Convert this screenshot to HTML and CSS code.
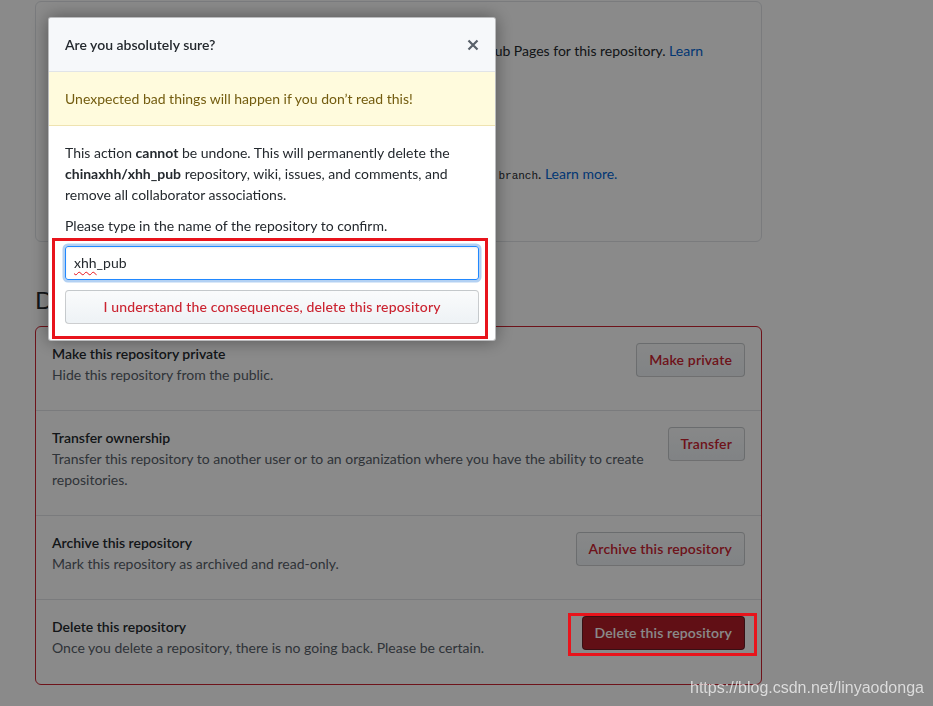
FILE: index.html
```html
<!DOCTYPE html>
<html lang="en">
<head>
<meta charset="utf-8">
<title>Settings · Danger Zone</title>
<link rel="stylesheet" href="styles.css">
</head>
<body>
<div class="page">
  <section class="box pages">
    <p class="pages-line">GitHub Pages is currently disabled. Select a source below to enable GitHub Pages for this repository. <a class="link" href="#">Learn</a><br><a class="link" href="#">more.</a></p>
    <h3 class="pages-head">Source</h3>
    <p class="pages-line">Your GitHub Pages site is currently being built and is served from <code>master branch</code>. <a class="link" href="#">Learn more.</a></p>
  </section>

  <h2 class="subhead">Danger Zone</h2>
  <div class="box danger">
    <div class="row">
      <div class="row-text">
        <strong class="row-title">Make this repository private</strong>
        <p class="row-desc">Hide this repository from the public.</p>
      </div>
      <button class="btn btn-danger">Make private</button>
    </div>
    <div class="row">
      <div class="row-text">
        <strong class="row-title">Transfer ownership</strong>
        <p class="row-desc">Transfer this repository to another user or to an organization where you have the ability to create repositories.</p>
      </div>
      <button class="btn btn-danger">Transfer</button>
    </div>
    <div class="row">
      <div class="row-text">
        <strong class="row-title">Archive this repository</strong>
        <p class="row-desc">Mark this repository as archived and read-only.</p>
      </div>
      <button class="btn btn-danger">Archive this repository</button>
    </div>
    <div class="row">
      <div class="row-text">
        <strong class="row-title">Delete this repository</strong>
        <p class="row-desc">Once you delete a repository, there is no going back. Please be certain.</p>
      </div>
      <button class="btn btn-delete">Delete this repository</button>
    </div>
  </div>
</div>

<div class="overlay"></div>

<div class="modal" role="dialog">
  <div class="modal-header">
    <h3 class="modal-title">Are you absolutely sure?</h3>
    <button class="close" aria-label="Close">
      <svg width="12" height="12" viewBox="0 0 12 12"><path d="M1.5 1.5 L10.5 10.5 M10.5 1.5 L1.5 10.5" stroke="#586069" stroke-width="2.2" stroke-linecap="butt" fill="none"/></svg>
    </button>
  </div>
  <div class="flash">Unexpected bad things will happen if you don’t read this!</div>
  <div class="modal-body">
    <p class="warn">This action <strong>cannot</strong> be undone. This will permanently delete the <strong>chinaxhh/xhh_pub</strong> repository, wiki, issues, and comments, and remove all collaborator associations.</p>
    <p class="confirm-label">Please type in the name of the repository to confirm.</p>
    <div class="confirm-group">
      <div class="input" role="textbox"><span class="misspelled">xhh</span>_pub</div>
      <button class="btn btn-block btn-danger">I understand the consequences, delete this repository</button>
    </div>
  </div>
</div>

<div class="watermark">https://blog.csdn.net/linyaodonga</div>
</body>
</html>
```

FILE: styles.css
```css
* { box-sizing: border-box; }

html, body {
  margin: 0;
  padding: 0;
  background: #fff;
}

body {
  font-family: "Lato", "Noto Sans", sans-serif;
  font-size: 14px;
  line-height: 1.5;
  color: #24292e;
  width: 933px;
  height: 706px;
  overflow: hidden;
}

.page {
  margin: 1px 0 0 35px;
  width: 727px;
}

.box {
  border: 1px solid #e1e4e8;
  border-radius: 6px;
}

.pages {
  height: 241px;
  padding: 38px 16px 16px 16px;
}

.pages-line {
  margin: 0;
  line-height: 21px;
  white-space: nowrap;
}

.pages-head {
  margin: 30px 0 30px;
  font-size: 14px;
  line-height: 21px;
  font-weight: 600;
}

.link { color: #0366d6; text-decoration: none; }

code {
  font-family: "Liberation Mono", "DejaVu Sans Mono", monospace;
  font-size: 11px;
}

.subhead {
  margin: 40px 0 0;
  padding-bottom: 8px;
  font-size: 24px;
  line-height: 36px;
  font-weight: 400;
}

.danger {
  border-color: #cb2431;
}

.row {
  display: flex;
  justify-content: space-between;
  align-items: flex-start;
  gap: 16px;
  padding: 16px 16px 25px;
  border-top: 1px solid #e1e4e8;
}

.row:first-child { border-top: 0; }

.row:last-child { padding-bottom: 26px; }

.row-text { flex: 1 1 auto; min-width: 0; }

.row-title {
  display: block;
  font-weight: 600;
  line-height: 21px;
}

.row-desc {
  margin: 0;
  line-height: 21px;
  color: #586069;
}

.btn {
  flex: none;
  font-family: inherit;
  font-size: 14px;
  font-weight: 600;
  line-height: 20px;
  letter-spacing: 0.15px;
  padding: 6px 12px;
  border: 1px solid rgba(27, 31, 35, 0.2);
  border-radius: 4px;
  background: linear-gradient(#fafbfc, #eff3f6 90%);
  cursor: pointer;
  white-space: nowrap;
}

.btn-danger { color: #cb2431; }

.btn-delete {
  position: relative;
  color: #fff;
  background: #b31d28;
  border-color: rgba(27, 31, 35, 0.5);
}

.btn-delete::after {
  content: "";
  position: absolute;
  left: -15px;
  right: -13px;
  top: -4px;
  bottom: -7px;
  border: 3px solid #e8141c;
  z-index: 30;
}

.overlay {
  position: fixed;
  inset: 0;
  background: rgba(0, 0, 0, 0.46);
  z-index: 10;
}

.modal {
  position: fixed;
  left: 48px;
  top: 17px;
  width: 448px;
  background: #fff;
  border: 1px solid rgba(27, 31, 35, 0.3);
  border-radius: 3px;
  box-shadow: 0 0 18px rgba(0, 0, 0, 0.4);
  z-index: 20;
}

.modal-header {
  display: flex;
  align-items: center;
  justify-content: space-between;
  height: 54px;
  padding: 0 16px;
  background: #f6f8fa;
  border-bottom: 1px solid #e1e4e8;
  border-radius: 3px 3px 0 0;
}

.modal-title {
  margin: 0;
  font-size: 14px;
  font-weight: 600;
  line-height: 21px;
}

.close {
  border: 0;
  background: none;
  padding: 0;
  width: 12px;
  height: 12px;
  display: flex;
}

.flash {
  height: 54px;
  display: flex;
  align-items: center;
  padding: 0 16px;
  background: #fffbdd;
  color: #735c0f;
  border-bottom: 1px solid rgba(176, 136, 0, 0.2);
}

.modal-body {
  padding: 16px;
}

.warn {
  margin: 0 0 10px;
  line-height: 21px;
}

.confirm-label {
  margin: 0 0 10px;
  line-height: 21px;
}

.confirm-group {
  position: relative;
  display: flex;
  flex-direction: column;
  gap: 10px;
}

.confirm-group::after {
  content: "";
  position: absolute;
  left: -13px;
  right: -9px;
  top: -8px;
  bottom: -15px;
  border: 3px solid #e8141c;
}

.input {
  height: 34px;
  padding: 6px 8px;
  line-height: 20px;
  border: 1px solid #2188ff;
  border-radius: 3px;
  box-shadow: inset 0 1px 2px rgba(27, 31, 35, 0.075), 0 0 0 2.5px rgba(3, 102, 214, 0.3);
  color: #24292e;
}

.misspelled {
  text-decoration: underline wavy #e8141c;
  text-decoration-thickness: 1px;
  text-underline-offset: 3px;
}

.btn-block {
  display: block;
  width: 100%;
  text-align: center;
  font-weight: 500;
}

.watermark {
  position: fixed;
  left: 690px;
  top: 676px;
  font-family: "Liberation Sans", Arial, sans-serif;
  font-size: 16px;
  line-height: 24px;
  color: rgba(255, 255, 255, 0.75);
  text-shadow: 0 0 1px rgba(0, 0, 0, 0.2);
  z-index: 40;
  white-space: nowrap;
}
```
